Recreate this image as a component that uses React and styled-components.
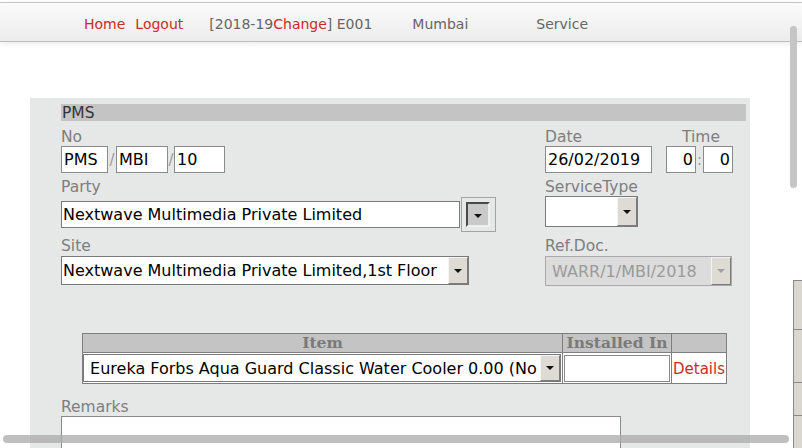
import React from 'react';
import styled, { createGlobalStyle } from 'styled-components';

const GlobalStyle = createGlobalStyle`
  html, body {
    margin: 0;
    padding: 0;
    background: #ffffff;
    overflow: hidden;
  }
  body {
    font-family: 'DejaVu Sans', Verdana, sans-serif;
    width: 802px;
    height: 448px;
    position: relative;
  }
`;

const TopBar = styled.div`
  margin-top: 2px;
  height: 38px;
  border-top: 1px solid #c4c4c4;
  border-bottom: 1px solid #bdbdbd;
  background: linear-gradient(#fbfbfb, #ececec);
  box-shadow: 0 2px 6px rgba(0, 0, 0, 0.08);
  display: flex;
  align-items: center;
  padding-left: 84px;
  font-size: 14px;
  color: #666;
  & > span {
    position: relative;
    top: 2px;
  }
`;

const NavLink = styled.span`
  color: ${(p) => (p.$red ? '#cc2a2a' : '#666')};
  margin-right: ${(p) => p.$gap || 0}px;
`;

const Content = styled.div`
  display: flex;
  padding-top: 56px;
`;

const Panel = styled.div`
  margin-left: 30px;
  width: 720px;
  height: 360px;
  background: #e6e7e7;
  padding: 6px 4px 0 31px;
  box-sizing: border-box;
  flex-shrink: 0;
`;

const PanelTitle = styled.div`
  background: #c4c4c4;
  height: 17px;
  line-height: 18px;
  font-size: 15.5px;
  color: #333;
  padding-left: 1px;
`;

const FormGrid = styled.div`
  display: grid;
  grid-template-columns: 484px 1fr;
  row-gap: 5px;
  margin-top: 7px;
`;

const Cell = styled.div`
  display: flex;
  flex-direction: column;
  align-items: flex-start;
`;

const Label = styled.div`
  font-size: 15.5px;
  line-height: 18px;
  color: #7e7e7e;
  ${(p) => p.$right && 'align-self: stretch; display: flex; justify-content: space-between;'}
`;

const InlineRow = styled.div`
  display: flex;
  align-items: center;
  margin-top: ${(p) => p.$mt || 0}px;
`;

const TextBox = styled.input`
  box-sizing: border-box;
  width: ${(p) => p.$w}px;
  height: 27px;
  border: 1px solid #8a8a8a;
  background: #fff;
  font-family: 'DejaVu Sans', Verdana, sans-serif;
  font-size: 16px;
  color: #000;
  padding: 0 2px;
  margin: 0;
  outline: none;
  text-align: ${(p) => (p.$right ? 'right' : 'left')};
`;

const Sep = styled.span`
  color: #999;
  font-size: 15px;
  width: ${(p) => p.$w}px;
  text-align: center;
`;

const SelectBox = styled.div`
  box-sizing: border-box;
  width: ${(p) => p.$w}px;
  height: ${(p) => p.$h}px;
  border: 1px solid ${(p) => (p.$disabled ? '#a9a9a9' : '#7a7a7a')};
  background: ${(p) => (p.$disabled ? '#dcdcdc' : '#fff')};
  display: flex;
  align-items: stretch;
  font-size: 16px;
  color: ${(p) => (p.$disabled ? '#9a9a9a' : '#000')};
`;

const SelectText = styled.div`
  flex: 1;
  overflow: hidden;
  white-space: nowrap;
  padding-left: 1px;
  display: flex;
  align-items: center;
`;

const ArrowBtn = styled.div`
  box-sizing: border-box;
  width: 20px;
  background: #dedbd5;
  border-top: 1px solid #f4f4f4;
  border-left: 1px solid #f4f4f4;
  border-right: 1px solid #7c7c7c;
  border-bottom: 1px solid #7c7c7c;
  display: flex;
  align-items: center;
  justify-content: center;
  flex-shrink: 0;
  &::after {
    content: '';
    border-left: 4px solid transparent;
    border-right: 4px solid transparent;
    border-top: 4px solid ${(p) => (p.$disabled ? '#a0a0a0' : '#111')};
  }
`;

const FocusBtn = styled.div`
  box-sizing: border-box;
  width: 35px;
  height: 35px;
  margin-left: 1px;
  border: 1px solid #a3a3a3;
  padding: 4px 5px 4px 4px;
  display: flex;
`;

const FocusInner = styled.div`
  flex: 1;
  background: #c9c9c9;
  border-top: 2px solid #4a4a4a;
  border-left: 2px solid #4a4a4a;
  border-right: 2px solid #f0f0f0;
  border-bottom: 2px solid #f0f0f0;
  display: flex;
  align-items: center;
  justify-content: center;
  &::after {
    content: '';
    border-left: 4px solid transparent;
    border-right: 4px solid transparent;
    border-top: 4px solid #111;
    margin-top: 2px;
  }
`;

const Table = styled.table`
  border-collapse: collapse;
  margin: 47px 0 0 21px;
  width: 642px;
  table-layout: fixed;
`;

const Th = styled.th`
  background: #c4c4c4;
  border: 1px solid #7e7e7e;
  height: 18px;
  padding: 0;
  font-family: 'DejaVu Serif', Georgia, serif;
  font-weight: bold;
  font-size: 15.5px;
  line-height: 18px;
  color: #7a7a7a;
  text-align: center;
  width: ${(p) => p.$w}px;
`;

const Td = styled.td`
  border: 1px solid #7e7e7e;
  background: #fff;
  padding: ${(p) => (p.$pad ? '1px' : '0')};
  height: 28px;
  vertical-align: middle;
`;

const DetailsLink = styled.span`
  color: #cc2a2a;
  font-size: 15px;
  padding-left: 1px;
`;

const RemarksLabel = styled(Label)`
  margin-top: 14px;
`;

const TextArea = styled.div`
  box-sizing: border-box;
  width: 560px;
  height: 60px;
  background: #fff;
  border: 1px solid #8a8a8a;
`;

const SideGrid = styled.div`
  margin: 182px 0 0 43px;
  width: 40px;
  flex-shrink: 0;
  border-left: 1px solid #8a8a8a;
  background: #d9d7d0;
  align-self: flex-start;
`;

const SideCell = styled.div`
  height: ${(p) => p.$h}px;
  border-top: 1px solid #8a8a8a;
`;

const VScroll = styled.div`
  position: absolute;
  left: 790px;
  top: 26px;
  width: 7px;
  height: 162px;
  border-radius: 4px;
  background: #c6c6c6;
`;

const HScroll = styled.div`
  position: absolute;
  left: 3px;
  top: 435px;
  width: 786px;
  height: 8px;
  border-radius: 4px;
  background: rgba(170, 170, 170, 0.75);
`;

const Select = ({ w, h, text, arrow, disabled }) => (
  <SelectBox $w={w} $h={h} $disabled={disabled}>
    <SelectText>{text}</SelectText>
    {arrow && <ArrowBtn $disabled={disabled} />}
  </SelectBox>
);

export default function App() {
  return (
    <>
      <GlobalStyle />
      <TopBar>
        <NavLink $red $gap={10}>Home</NavLink>
        <NavLink $red $gap={26}>Logout</NavLink>
        <NavLink>[2018-19</NavLink>
        <NavLink $red>Change</NavLink>
        <NavLink $gap={40}>] E001</NavLink>
        <NavLink $gap={68}>Mumbai</NavLink>
        <NavLink>Service</NavLink>
      </TopBar>
      <Content>
        <Panel>
          <PanelTitle>PMS</PanelTitle>
          <FormGrid>
            <Cell>
              <Label>No</Label>
              <InlineRow>
                <TextBox $w={47} readOnly value="PMS" />
                <Sep $w={8}>/</Sep>
                <TextBox $w={52} readOnly value="MBI" />
                <Sep $w={6}>/</Sep>
                <TextBox $w={51} readOnly value="10" />
              </InlineRow>
            </Cell>
            <Cell>
              <Label $right style={{ width: 186 }}>
                <span>Date</span>
                <span style={{ marginRight: 11 }}>Time</span>
              </Label>
              <InlineRow>
                <TextBox $w={107} readOnly value="26/02/2019" />
                <span style={{ width: 14 }} />
                <TextBox $w={30} $right readOnly value="0" />
                <Sep $w={7}>:</Sep>
                <TextBox $w={30} $right readOnly value="0" />
              </InlineRow>
            </Cell>

            <Cell>
              <Label>Party</Label>
              <InlineRow $mt={1}>
                <Select w={399} h={27} text="Nextwave Multimedia Private Limited" />
                <FocusBtn>
                  <FocusInner />
                </FocusBtn>
              </InlineRow>
            </Cell>
            <Cell>
              <Label>ServiceType</Label>
              <InlineRow>
                <Select w={93} h={31} text="" arrow />
              </InlineRow>
            </Cell>

            <Cell>
              <Label>Site</Label>
              <InlineRow $mt={1}>
                <Select w={408} h={29} text="Nextwave Multimedia Private Limited,1st Floor" arrow />
              </InlineRow>
            </Cell>
            <Cell>
              <Label>Ref.Doc.</Label>
              <InlineRow $mt={1}>
                <Select w={187} h={30} text={'\u00a0WARR/1/MBI/2018'} arrow disabled />
              </InlineRow>
            </Cell>
          </FormGrid>

          <Table>
            <thead>
              <tr>
                <Th $w={479}>Item</Th>
                <Th $w={108}>Installed In</Th>
                <Th $w={54}></Th>
              </tr>
            </thead>
            <tbody>
              <tr>
                <Td>
                  <Select
                    w={478}
                    h={28}
                    text={'\u00a0Eureka Forbs Aqua Guard Classic Water Cooler 0.00 (No'}
                    arrow
                  />
                </Td>
                <Td $pad>
                  <TextBox $w={106} readOnly value="" />
                </Td>
                <Td>
                  <DetailsLink>Details</DetailsLink>
                </Td>
              </tr>
            </tbody>
          </Table>

          <RemarksLabel>Remarks</RemarksLabel>
          <TextArea />
        </Panel>
        <SideGrid>
          <SideCell $h={48} />
          <SideCell $h={52} />
          <SideCell $h={32} />
          <SideCell $h={40} />
        </SideGrid>
      </Content>
      <VScroll />
      <HScroll />
    </>
  );
}
